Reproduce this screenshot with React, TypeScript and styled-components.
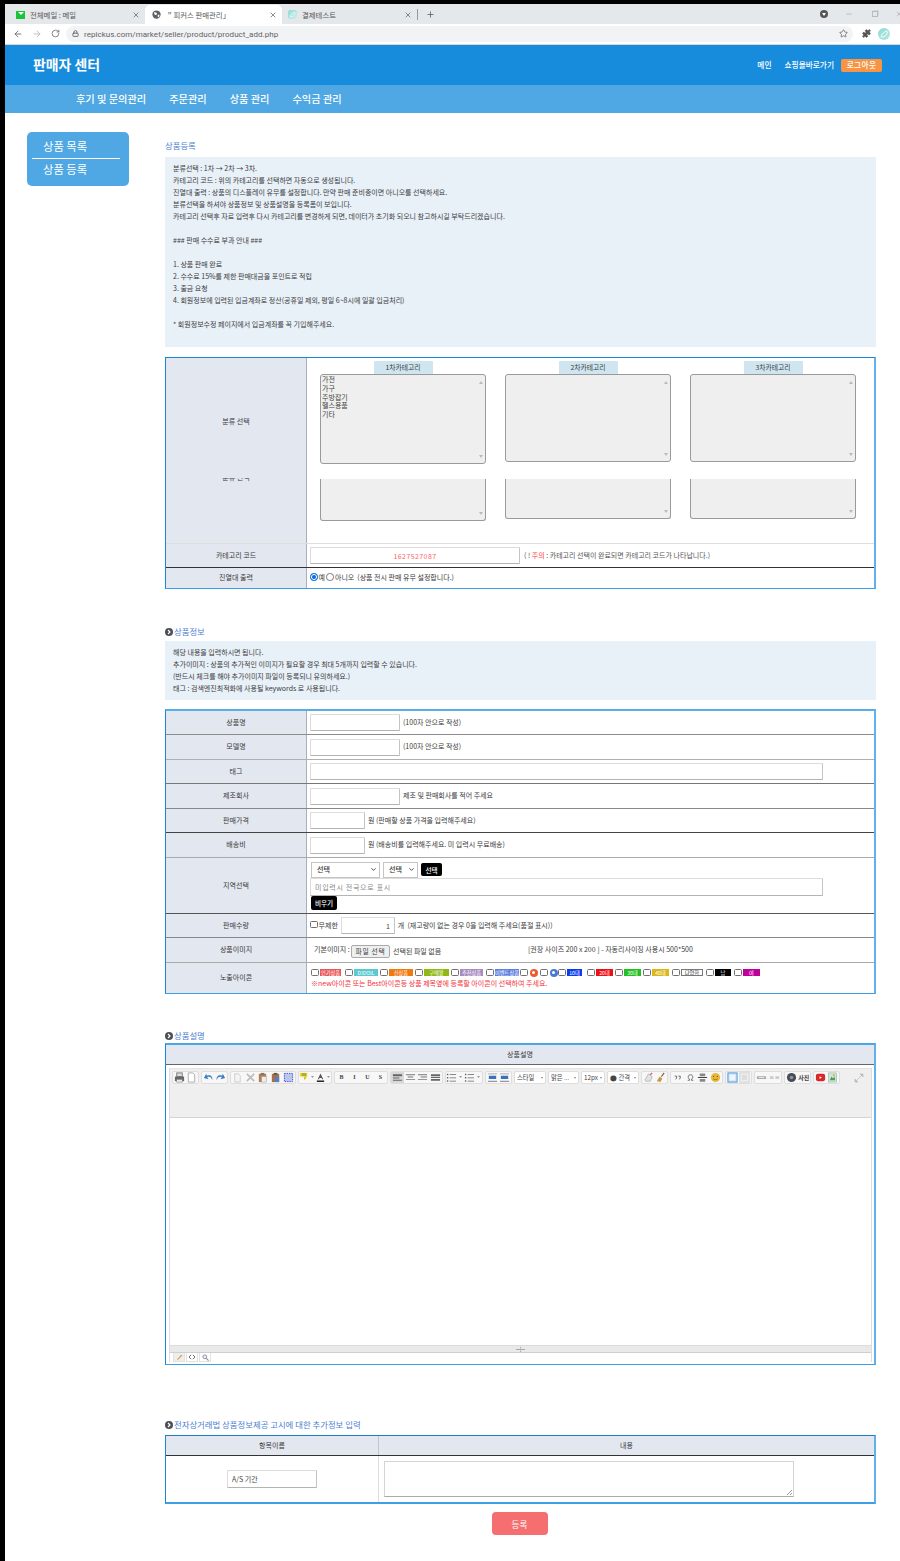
import React from "react";
import styled, { createGlobalStyle } from "styled-components";
import { ArrowLeft, ArrowRight, ChevronDown, Lock, Minus, Plus, Puzzle, RotateCw, Star, X } from "lucide-react";

const Global = createGlobalStyle`
  html, body { margin: 0; padding: 0; background: #fff; }
  * { box-sizing: border-box; }
  body { font-family: "Noto Sans CJK KR", "Noto Sans", "Liberation Sans", sans-serif; font-size: 7px; color: #3a3a3a; }
`;

const Page = styled.div`
  width: 900px; height: 1561px; overflow: hidden; position: relative;
  border-top: 4px solid #000; border-left: 5px solid #000; background: #fff;
  display: flex; flex-direction: column;
`;

/* browser chrome */
const TabStrip = styled.div`
  height: 20px; background: #e5e8eb; display: flex; align-items: stretch; flex: none;
`;
const Tab = styled.div<{ $w: number; $pad: number; $active?: boolean }>`
  width: ${p => p.$w}px; padding: 0 5px 0 ${p => p.$pad}px; display: flex; align-items: center; gap: 5px;
  margin-top: 1px; border-radius: 5px 5px 0 0; color: #555; font-size: 7.4px; white-space: nowrap;
  background: ${p => (p.$active ? "#fff" : "transparent")};
`;
const TabClose = styled.span`margin-left: auto; display: flex; color: #555;`;
const MailIcon = styled.span`
  width: 9px; height: 8px; background: #19c437; display: flex; align-items: flex-start; justify-content: center; flex: none;
  &::after { content: ""; border: 3.5px solid transparent; border-top: 3.5px solid #fff; margin-top: 1px; }
`;
const TabDivider = styled.span`width: 1px; height: 11px; background: #999; align-self: center;`;
const NewTab = styled.span`display: flex; align-items: center; margin-left: 8px; color: #555;`;
const WindowControls = styled.div`margin-left: auto; display: flex; align-items: center; gap: 17px; margin-right: -3px; color: #aaa;`;
const ProfileDot = styled.span`
  width: 8px; height: 8px; border-radius: 50%; background: #555; display: flex; align-items: center; justify-content: center;
  &::after { content: ""; border: 2px solid transparent; border-top: 3px solid #fff; margin-top: 3px; }
`;
const RestoreBox = styled.span`
  width: 6px; height: 6px; margin-left: 2px; border: 1px solid #bbb; box-shadow: 1px -1px 0 -0.3px #ccc;
`;
const AddressBar = styled.div`
  height: 21px; flex: none; background: #fff; border-bottom: 1px solid #d7d7d7; display: flex; align-items: center;
  padding: 0 8px 1px 8px; color: #5f6368;
`;
const NavIcons = styled.div`display: flex; align-items: center; gap: 9px; width: 53px;`;
const Omnibox = styled.div`
  width: 787px; height: 16px; border-radius: 8px; background: #f1f3f4; display: flex; align-items: center;
  padding: 0 5px 0 6px; gap: 5px; font: 8px Roboto, "Liberation Sans", sans-serif; color: #5f6368; letter-spacing: .004em;
`;
const OmniText = styled.span`margin-top: 1px;`;
const StarSlot = styled.span`margin-left: auto; display: flex;`;
const ExtIcons = styled.div`display: flex; align-items: center; margin-left: 9px; gap: 7px; color: #555;`;
const Avatar = styled.span`
  width: 12px; height: 12px; border-radius: 50%; background: linear-gradient(135deg, #8edbd5, #b6e6e2); display: flex;
`;
const SiteIcon = styled.span`
  width: 9px; height: 9px; border-radius: 2px; background: linear-gradient(135deg, #8edbd5, #cfeeea); flex: none;
  display: flex;
`;

/* site header */
const Header = styled.header`
  height: 40px; flex: none; background: #188cdc; display: flex; align-items: center; padding: 0 18px 0 28px; color: #fff;
`;
const Brand = styled.div`font-size: 13.9px; font-weight: 700; line-height: 1; margin-top: -1px;`;
const HeaderLinks = styled.div`margin-left: auto; display: flex; align-items: center; gap: 13px; font-size: 7.7px; font-weight: 500; padding-bottom: 2px;`;
const Logout = styled.span`
  width: 41px; height: 13px; margin: 2px 0 0 -6px; padding-bottom: 1px; border-radius: 2px; background: #f89444; display: flex; align-items: center; justify-content: center; letter-spacing: .04em;
`;
const NavBar = styled.nav`
  height: 28px; flex: none; background: #4fa8e3; display: flex; align-items: center; gap: 23px; padding: 0 0 2px 71px;
  color: #fff; font-size: 10.2px; font-weight: 500;
`;

const Content = styled.div`display: flex; align-items: flex-start;`;
const Sidebar = styled.aside`
  width: 102px; height: 54px; margin: 19px 36px 0 22px; background: #4fa8e3; border-radius: 5px; color: #fff; font-size: 11.3px; flex: none;
`;
const SideItem = styled.div<{ $first?: boolean }>`
  height: 27px; margin: 0 9px 0 5px; padding-left: 11px; line-height: 13px;
  padding-top: ${p => (p.$first ? 8 : 4)}px;
  border-bottom: ${p => (p.$first ? "1px solid #fff" : "none")};
`;
const Main = styled.main`width: 711px; padding-top: 27px; flex: none; display: flex; flex-direction: column;`;
const Title = styled.div<{ $mt?: number; $h: number }>`
  height: ${p => p.$h}px; margin-top: ${p => p.$mt ?? 0}px; line-height: 10px; font-size: 8.4px; color: #4d80d4;
  display: flex; align-items: flex-start; gap: 1px; white-space: nowrap;
`;
const TitleDot = styled.span`
  width: 8px; height: 8px; border-radius: 50%; background: #4a4f55; margin-top: 2px; display: flex; align-items: center; justify-content: center;
`;
const Note = styled.div<{ $h: number }>`
  height: ${p => p.$h}px; background: #e8f0f8; padding: 5px 8px 0; line-height: 12px; white-space: pre; color: #3c3c3c;
`;
const Panel = styled.section<{ $top: number; $bottom: number; $topColor: string; $mt: number }>`
  margin-top: ${p => p.$mt}px; border-style: solid; border-width: ${p => p.$top}px 2px ${p => p.$bottom}px 1px;
  border-color: ${p => p.$topColor} #62b0ec #3f9fe6 #1a86d6;
`;
const Row = styled.div<{ $h: number; $line?: string }>`
  height: ${p => p.$h}px; display: flex; border-bottom: ${p => (p.$line ? `1px solid ${p.$line}` : "none")};
`;
const Label = styled.div`
  width: 141px; flex: none; background: #e3e7f0; border-right: 1px solid #a9b0bc; display: flex; align-items: center; justify-content: center; padding-bottom: 2px;
`;
const CategoryLabel = styled(Label)`
  flex-direction: column; justify-content: flex-start; padding: 57px 0 0; line-height: 12px;
`;
const LabelClip = styled.div`
  height: 5px; margin-top: 51px; overflow: hidden; display: flex; align-items: flex-end; line-height: 11px;
`;
const Value = styled.div`
  flex: 1; min-width: 0; display: flex; align-items: center; gap: 3px; padding: 0 0 2px 3px; white-space: nowrap;
  & > input { margin-top: 2px; }
`;
const ColValue = styled.div<{ $pt: number }>`
  flex: 1; min-width: 0; display: flex; flex-direction: column; align-items: flex-start; padding: ${p => p.$pt}px 0 0 3px; white-space: nowrap;
`;
const Field = styled.input<{ $w: number; $h?: number; $color?: string; $align?: string; $spaced?: boolean }>`
  width: ${p => p.$w}px; height: ${p => p.$h ?? 17}px; flex: none; padding: 0 4px; background: #fff; font: inherit; outline: none;
  border: 1px solid #dcdcdc; border-bottom-color: #b4b4b4; border-right-color: #c4c4c4; border-radius: 1px;
  color: ${p => p.$color ?? "#444"}; text-align: ${p => p.$align ?? "left"};
  letter-spacing: ${p => (p.$spaced ? ".06em" : "normal")};
  &::placeholder { color: #888; letter-spacing: .1em; }
`;

/* category pickers */
const CategoryCols = styled.div`flex: 1; display: flex; gap: 19px; padding: 3px 0 0 13px;`;
const CategoryCol = styled.div`width: 166px; display: flex; flex-direction: column; align-items: center;`;
const Chip = styled.div`
  width: 59px; height: 13px; padding-bottom: 1px; background: #cfe6f1; display: flex; align-items: center; justify-content: center; border-radius: 1px 1px 0 0; font-size: 6.8px;
`;
const ListBox = styled.div<{ $h: number; $cut?: boolean; $mt?: number }>`
  width: 166px; height: ${p => p.$h}px; margin-top: ${p => p.$mt ?? 0}px; background: #efefef; position: relative; flex: none;
  border: 1px solid #9a9a9a; border-top: ${p => (p.$cut ? "none" : "1px solid #9a9a9a")};
  border-radius: ${p => (p.$cut ? "0 0 3px 3px" : "3px")};
  padding: 0 0 0 1px; line-height: 8.8px; font-size: 7px; color: #444;
`;
const ScrollArrow = styled.span<{ $up?: boolean }>`
  position: absolute; right: 2px; width: 0; height: 0; border: 2px solid transparent;
  ${p => (p.$up ? "top: 4px; border-bottom: 3px solid #bbb;" : "bottom: 3px; border-top: 3px solid #bbb;")}
`;
const Warn = styled.span`color: #f44;`;
const CodeNote = styled.span`color: #555; margin-left: 1px;`;
const RadioGroup = styled.label`
  display: inline-flex; align-items: center;
  & + & { margin-left: -1.5px; }
`;
const Radio = styled.input`
  appearance: none; width: 7.5px; height: 7.5px; margin: 0 1px 0 0; border-radius: 50%; border: 1px solid #777; background: #fff;
  &:checked { background: #0c6fe0; border-color: #0c6fe0; box-shadow: inset 0 0 0 1px #fff; }
`;
const Check = styled.input`
  appearance: none; width: 7.5px; height: 7.5px; margin: 0 1px 0 0; border-radius: 1.5px; border: 1px solid #707070; background: #fff; flex: none;
`;

const SelectBox = styled.div<{ $w: number }>`
  width: ${p => p.$w}px; height: 16px; border: 1px solid #c4c4c4; background: #fff; display: flex; align-items: center; justify-content: space-between; padding: 0 2px 1px 5px; color: #333; font-weight: 500;
`;
const RegionLine = styled.div`display: flex; align-items: center; padding-left: 1px; gap: 3px; height: 17px;`;
const BlackButton = styled.span<{ $w: number; $h: number; $ml?: number }>`
  width: ${p => p.$w}px; height: ${p => p.$h}px; margin-left: ${p => p.$ml ?? 0}px; background: #000; color: #fff; border-radius: 2px; display: flex; align-items: center; justify-content: center; font-size: 6.6px; font-weight: 500; flex: none;
`;
const FileButton = styled.span`
  width: 39px; height: 13px; margin-top: 4px; border: 1px solid #aaa; background: #efefef; border-radius: 2px; display: flex; align-items: center; justify-content: center; letter-spacing: .1em; font-size: 6.8px; flex: none;
`;
const ImageLead = styled.span`margin-left: 4px; width: 34px;`;
const FileState = styled.span`width: 132px; margin-top: 4px;`;
const IconRow = styled.div`display: flex; align-items: center; height: 9px; padding-left: 1px;`;
const IconPair = styled.label<{ $w: number }>`width: ${p => p.$w}px; flex: none; display: flex; align-items: center; gap: 0.5px;`;
const Badge = styled.span<{ $w: number; $c: string; $line?: boolean }>`
  width: ${p => p.$w}px; height: 7.5px; background: ${p => p.$c}; color: ${p => (p.$line ? "#222" : "#fff")};
  font-size: 5.2px; line-height: 7.5px; text-align: center; overflow: hidden; white-space: nowrap;
  outline: ${p => (p.$line ? "1px solid #777" : "none")}; outline-offset: -1px;
`;
const RoundBadge = styled.span<{ $c: string }>`
  width: 8px; height: 8px; margin-left: 0.5px; border-radius: 50%; background: ${p => p.$c}; display: flex; align-items: center; justify-content: center;
  &::after { content: ""; width: 3px; height: 3px; border-radius: 50%; background: #fff; }
`;
const RedNote = styled.div`color: #f2303a; margin-top: 1px; line-height: 11px; padding-left: 1px;`;

/* editor */
const HeadCell = styled.div<{ $w?: number; $bar?: boolean }>`
  ${p => (p.$w ? `width: ${p.$w}px; flex: none;` : "flex: 1;")}
  background: #e3e7f0; display: flex; align-items: center; justify-content: center; padding-bottom: 1px;
  border-right: ${p => (p.$bar ? "1px solid #c2c6cf" : "none")};
`;
const EditorWrap = styled.div`padding: 3px 1px 2px 3px;`;
const Editor = styled.div`border-left: 1px solid #ddd; border-right: 1px solid #ddd; margin-right: 1px; display: flex; flex-direction: column;`;
const Toolbar = styled.div`
  height: 50px; background: #efefef; border-top: 1px solid #e4e4e4; border-bottom: 1px solid #d4d4d4; padding: 2px 0 0 2px; display: flex; align-items: flex-start; gap: 2px;
`;
const ToolGroup = styled.div<{ $w: number }>`
  width: ${p => p.$w}px; height: 12.5px; flex: none; background: #f7f7f7; border: 1px solid #dedede; border-radius: 2px; display: flex; align-items: center; overflow: hidden;
`;
const ToolBtn = styled.span<{ $on?: boolean }>`
  flex: 1; height: 100%; display: flex; align-items: center; justify-content: center; font: 700 6px "Liberation Serif", "Noto Sans CJK KR", serif; color: #444; white-space: nowrap;
  background: ${p => (p.$on ? "#d8d8d8" : "transparent")};
`;
const ToolSelect = styled.div<{ $w: number }>`
  width: ${p => p.$w}px; height: 12.5px; flex: none; background: #fff; border: 1px solid #dedede; border-radius: 2px; font-size: 6.3px; color: #444; display: flex; align-items: center; justify-content: space-between; padding: 0 2px; white-space: nowrap;
  &::after { content: ""; border: 1.5px solid transparent; border-top: 2px solid #888; margin-top: 2px; }
`;
const Expand = styled.span`margin-left: 12px; margin-top: 2px; display: flex;`;
const EditArea = styled.div`height: 227px; background: #fff;`;
const ResizeBar = styled.div`
  height: 8px; background: #e9e9e9; border-top: 1px solid #dcdcdc; border-bottom: 1px solid #cfcfcf; display: flex; align-items: center; justify-content: center;
`;
const ModeTabs = styled.div`height: 9px; display: flex; gap: 1px; padding-left: 3px; background: #fff;`;
const ModeTab = styled.span<{ $on?: boolean }>`
  width: 12px; height: 9px; border: 1px solid #e2e2e2; border-top: none; background: ${p => (p.$on ? "#eee" : "#fff")}; display: flex; align-items: center; justify-content: center;
`;
const InfoCellLeft = styled.div`width: 213px; flex: none; border-right: 1px solid #ddd; padding: 14px 0 0 61px;`;
const InfoCellRight = styled.div`flex: 1; padding: 5px 0 0 5px; position: relative;`;
const TextArea = styled.div`
  width: 410px; height: 36px; background: #fff; border: 1px solid #d4d4d4; border-bottom-color: #aaa; position: relative;
  &::after { content: ""; position: absolute; right: 1px; bottom: 1px; width: 5px; height: 5px; background: linear-gradient(135deg, transparent 50%, #999 50%, #999 60%, transparent 60%, transparent 75%, #999 75%, #999 85%, transparent 85%); }
`;
const SubmitRow = styled.div`display: flex; justify-content: center; margin-top: 8px; padding-right: 2px;`;
const Submit = styled.span`
  width: 56px; height: 23px; background: #f56f70; color: #fff; border-radius: 4px; display: flex; align-items: center; justify-content: center; font-size: 8.6px;
`;

const S = ({ children }: { children: React.ReactNode }) => (
  <svg width="11" height="11" viewBox="0 0 12 12">{children}</svg>
);
const icons: Record<string, React.ReactNode> = {
  print: <S><rect x="3" y="1" width="6" height="4" fill="#ddd" stroke="#777" /><rect x="1" y="5" width="10" height="5" fill="#666" /><rect x="3" y="8" width="6" height="3" fill="#eee" stroke="#777" strokeWidth=".6" /></S>,
  doc: <S><path d="M2.500 1h5l2 2v8h-7z" fill="#fff" stroke="#aaa" /></S>,
  undo: <S><path d="M10 9C9.500 5.500 7 4.500 4.500 5.500L6 8 1 6.500 3.500 2l.7 2C8 2.500 11 5 10 9z" fill="#3b7cc6" /></S>,
  redo: <S><path d="M2 9c.5-3.500 3-4.500 5.500-3.500L6 8l5-1.500L8.500 2l-.7 2C4 2.500 1 5 2 9z" fill="#3b7cc6" /></S>,
  copy: <S><path d="M3 2h4l2 2v7H3z" fill="#f4f4f4" stroke="#ccc" /></S>,
  cut: <S><path d="M2 2l8 8M10 2l-8 8" stroke="#bbb" strokeWidth="1.800" /></S>,
  paste: <S><rect x="2" y="2" width="8" height="9" fill="#b97b45" /><rect x="4" y="1" width="4" height="2" fill="#777" /><rect x="5" y="5" width="5" height="6" fill="#eee" stroke="#999" strokeWidth=".5" /></S>,
  pasteText: <S><rect x="2" y="2" width="8" height="9" fill="#a9703c" /><rect x="4" y="1" width="4" height="2" fill="#555" /><rect x="5" y="5" width="5" height="6" fill="#5e7cc4" /></S>,
  all: <S><rect x="1.500" y="1.500" width="9" height="9" fill="#b9c4f0" stroke="#3d4fc4" strokeDasharray="1.500 1" /></S>,
  hilite: <S><rect x="1" y="1" width="8" height="4" fill="#e6dc20" /><path d="M3 2h5M3 3.500h5" stroke="#555" strokeWidth=".6" /><path d="M5 5h3v1.500L6 9z" fill="#d9c820" /></S>,
  color: <S><path d="M6 1.500L3 8h1.300l.6-1.500h2.200L7.700 8H9z" fill="#555" /><rect x="2" y="9.300" width="8" height="1.500" fill="#111" /></S>,
  caret: <svg width="5" height="4" viewBox="0 0 5 4"><path d="M1 1h3L2.500 3z" fill="#999" /></svg>,
  alignL: <S><path d="M1 2.500h10v2H1zM1 6h7v1H1zM1 8.500h10v1H1z" fill="#666" /></S>,
  alignC: <S><path d="M1 2.500h10v1H1zM3 5h6v1H3zM1 7.500h10v1H1z" fill="#777" /></S>,
  alignR: <S><path d="M1 2.500h10v1H1zM4 5h7v1H4zM1 7.500h10v1H1z" fill="#777" /></S>,
  alignJ: <S><path d="M1 2.500h10v2H1zM1 5.500h10v1H1zM1 7.500h10v2H1z" fill="#666" /></S>,
  ul: <S><path d="M1 2h1.500v1.500H1zM1 5.500h1.500V7H1zM1 9h1.500v1.500H1zM4 2.500h7v.8H4zM4 6h7v.8H4zM4 9.500h7v.8H4z" fill="#666" /></S>,
  indent: <S><path d="M1 1.500h10v1H1zM1 9.500h10v1.500H1z" fill="#999" /><path d="M2 4h8v3.500H2z" fill="#3b6fc0" /></S>,
  eraser: <S><path d="M2 9l4-7 4 3-2 5H3z" fill="#e3e3e3" stroke="#999" strokeWidth=".6" /><path d="M8 3l2-2" stroke="#c55" strokeWidth="1.200" /></S>,
  broom: <S><path d="M2 10l3-5 3 2-2 4z" fill="#c79a45" /><path d="M7 5l3-4" stroke="#7a5a2a" strokeWidth="1.200" /></S>,
  quote: <S><path d="M3 4.500h2v2L4 8M7 4.500h2v2L8 8" fill="none" stroke="#555" strokeWidth=".9" /></S>,
  omega: <S><path d="M3 9h2V8C3 7 2.800 3 6 3s3 4 1 5v1h2" fill="none" stroke="#555" strokeWidth=".9" /></S>,
  hr: <S><path d="M3 1.500h6v3H3zM3 7.500h6v3H3z" fill="#888" /><path d="M1 6h10" stroke="#333" /></S>,
  smile: <S><circle cx="6" cy="6" r="5" fill="#e8b93a" /><circle cx="4" cy="4.800" r=".7" fill="#7a5a10" /><circle cx="8" cy="4.800" r=".7" fill="#7a5a10" /><path d="M3.500 7.500Q6 9.500 8.500 7.500" stroke="#7a5a10" strokeWidth=".7" fill="none" /></S>,
  table: <S><rect x="1" y="1" width="10" height="10" fill="#cfe2f6" stroke="#3f94d8" /><rect x="3" y="3" width="6" height="6" fill="#eef5fc" /></S>,
  tableOff: <S><rect x="1" y="1" width="10" height="10" fill="#f2f2f2" stroke="#ccc" /><path d="M3 3h6v6H3z" fill="#ddd" /></S>,
  link: <S><path d="M1 4.500h10v3H1z" fill="#aaa" /><path d="M3 6h6" stroke="#eee" /></S>,
  unlink: <S><path d="M1 4.500h4v3H1zM7 4.500h4v3H7z" fill="#ccc" /></S>,
  camera: <S><circle cx="6" cy="6" r="5" fill="#484c54" /><circle cx="6" cy="6" r="2" fill="#8893a4" /></S>,
  youtube: <S><rect x="1" y="2" width="10" height="8" rx="2" fill="#d9262b" /><path d="M5 4.500l2.500 1.500L5 7.500z" fill="#fff" /></S>,
  photo: <S><rect x="1.500" y="1" width="9" height="10" fill="#cfe6d0" stroke="#9ab" strokeWidth=".6" /><path d="M3 9l2-4 1.500 2L8 5l1 4z" fill="#4a9a5a" /><circle cx="7.500" cy="3.500" r="1" fill="#d9a93a" /></S>,
  pencil: <svg width="7" height="7" viewBox="0 0 8 8"><path d="M1 7l1-2 4-4 1 1-4 4z" fill="#d8a040" /><path d="M5.500 1.500l1 1" stroke="#d55" /></svg>,
  code: <svg width="8" height="6" viewBox="0 0 9 7"><path d="M3.500 1L1 3.500 3.500 6M5.500 1L8 3.500 5.500 6" fill="none" stroke="#555" /></svg>,
  zoom: <svg width="7" height="7" viewBox="0 0 8 8"><circle cx="3.200" cy="3.200" r="2.200" fill="#e8eef6" stroke="#889" /><path d="M5 5l2.500 2.500" stroke="#889" strokeWidth="1.200" /></svg>,
};

const Leaf = () => (
  <svg width="100%" height="100%" viewBox="0 0 12 12"><path d="M3 9.500C3.500 6 6 3.500 9.500 3M4 9c3 0 5-2 5.500-5" fill="none" stroke="#fff" strokeWidth=".9" /></svg>
);
const DotChevron = () => (
  <svg width="6" height="6" viewBox="0 0 6 6"><path d="M2 1l2 2-2 2" fill="none" stroke="#fff" strokeWidth="1.200" /></svg>
);
const PageGlobe = () => (
  <svg width="9" height="9" viewBox="0 0 12 12" style={{ flex: "none" }}>
    <circle cx="6" cy="6" r="5.500" fill="#5f6368" />
    <path d="M3 2.500l3 1 1 2-2 1-2-1zM7.500 7l2-1 .5 2-2 2z" fill="#fff" />
  </svg>
);

const noteA = `분류선택 : 1차 → 2차 → 3차.
카테고리 코드 : 위의 카테고리를 선택하면 자동으로 생성됩니다.
진열대 출력 : 상품의 디스플레이 유무를 설정합니다. 만약 판매 준비중이면 아니오를 선택하세요.
분류선택을 하셔야 상품정보 및 상품설명을 등록폼이 보입니다.
카테고리 선택후 자료 입력후 다시 카테고리를 변경하게 되면, 데이터가 초기화 되오니 참고하시길 부탁드리겠습니다.

### 판매 수수료 부과 안내 ###

1. 상품 판매 완료
2. 수수료 15%를 제한 판매대금을 포인트로 적립
3. 출금 요청
4. 회원정보에 입력된 입금계좌로 정산(공휴일 제외, 평일 6~8시에 일괄 입금처리)

* 회원정보수정 페이지에서 입금계좌를 꼭 기입해주세요.`;

const noteB = `해당 내용을 입력하시면 됩니다.
추가이미지 : 상품의 추가적인 이미지가 필요할 경우 최대 5개까지 입력할 수 있습니다.
(반드시 체크를 해야 추가이미지 파일이 등록되니 유의하세요.)
태그 : 검색엔진최적화에 사용될 keywords 로 사용됩니다.`;

const badges: { pair: number; w: number; c: string; t?: string; round?: boolean; line?: boolean }[] = [
  { pair: 34, w: 21, c: "#e8585a", t: "인기상품" },
  { pair: 35, w: 24, c: "#5cc8cf", t: "DIDOIL" },
  { pair: 35, w: 24, c: "#f07a10", t: "신상품" },
  { pair: 36, w: 25, c: "#8fb814", t: "구매왕" },
  { pair: 35, w: 23, c: "#a68cc0", t: "추천상품" },
  { pair: 34, w: 24, c: "#5f7fdf", t: "이벤트상품" },
  { pair: 20, w: 8, c: "#ee5a30", round: true },
  { pair: 18, w: 8, c: "#4a78d8", round: true },
  { pair: 29, w: 15, c: "#0c3bf0", t: "10대" },
  { pair: 28, w: 17, c: "#f00d14", t: "20대" },
  { pair: 28, w: 17, c: "#22c020", t: "30대" },
  { pair: 29, w: 17, c: "#dcb820", t: "40대" },
  { pair: 34, w: 22, c: "#fff", t: "다양한", line: true },
  { pair: 28, w: 16, c: "#000", t: "남" },
  { pair: 27, w: 17, c: "#c0009c", t: "여" },
];

const toolbar: { w: number; items?: (string | [string, string])[]; sel?: string }[] = [
  { w: 27, items: ["print", "doc"] },
  { w: 27, items: ["undo", "redo"] },
  { w: 66, items: ["copy", "cut", "paste", "pasteText", "all"] },
  { w: 34, items: ["hilite", "caret", "color", "caret"] },
  { w: 54, items: [["t", "B"], ["t", "I"], ["t", "U"], ["t", "S"]] },
  { w: 53, items: ["alignL", "alignC", "alignR", "alignJ"] },
  { w: 38, items: ["ul", "caret", "ul", "caret"] },
  { w: 27, items: ["indent", "indent"] },
  { w: 32, sel: "스타일" },
  { w: 31, sel: "맑은 ..." },
  { w: 24, sel: "12px" },
  { w: 32, sel: "⬤ 간격" },
  { w: 27, items: ["eraser", "broom"] },
  { w: 53, items: ["quote", "omega", "hr", "smile"] },
  { w: 27, items: ["table", "tableOff"] },
  { w: 28, items: ["link", "unlink"] },
  { w: 27, items: ["camera", ["t", "사진"]] },
  { w: 27, items: ["youtube", "photo"] },
];

const Icon = ({ n }: { n: string }) => <>{icons[n]}</>;

export default function App() {
  return (
    <Page>
      <Global />
      <TabStrip>
        <Tab $w={140} $pad={11}><MailIcon />전체메일 : 메일<TabClose><X size={8} /></TabClose></Tab>
        <Tab $w={137} $pad={7} $active><PageGlobe />＂피커스 판매관리」<TabClose><X size={8} /></TabClose></Tab>
        <Tab $w={135} $pad={6}><SiteIcon><Leaf /></SiteIcon>결제테스트<TabClose><X size={8} /></TabClose></Tab>
        <TabDivider />
        <NewTab><Plus size={9} /></NewTab>
        <WindowControls>
          <ProfileDot />
          <Minus size={8} />
          <RestoreBox />
          <X size={8} />
        </WindowControls>
      </TabStrip>
      <AddressBar>
        <NavIcons>
          <ArrowLeft size={10} />
          <ArrowRight size={10} color="#b5b5b5" />
          <RotateCw size={9} />
        </NavIcons>
        <Omnibox>
          <Lock size={7} strokeWidth={3} />
          <OmniText>repickus.com/market/seller/product/product_add.php</OmniText>
          <StarSlot><Star size={9} /></StarSlot>
        </Omnibox>
        <ExtIcons>
          <Puzzle size={9} fill="#555" />
          <Avatar><Leaf /></Avatar>
        </ExtIcons>
      </AddressBar>

      <Header>
        <Brand>판매자 센터</Brand>
        <HeaderLinks>
          <span>메인</span>
          <span>쇼핑몰바로가기</span>
          <Logout>로그아웃</Logout>
        </HeaderLinks>
      </Header>
      <NavBar>
        <span>후기 및 문의관리</span>
        <span>주문관리</span>
        <span>상품 관리</span>
        <span>수익금 관리</span>
      </NavBar>

      <Content>
        <Sidebar>
          <SideItem $first>상품 목록</SideItem>
          <SideItem>상품 등록</SideItem>
        </Sidebar>
        <Main>
          <Title $h={17}>상품등록</Title>
          <Note $h={190}>{noteA}</Note>

          <Panel $mt={10} $top={1} $bottom={1} $topColor="#1a86d6">
            <Row $h={186} $line="#dedede">
              <CategoryLabel>
                <div>분류 선택</div>
                <LabelClip>분류 선택</LabelClip>
              </CategoryLabel>
              <CategoryCols>
                <CategoryCol>
                  <Chip>1차카테고리</Chip>
                  <ListBox $h={90}>
                    가전<br />가구<br />주방잡기<br />헬스용품<br />기타
                    <ScrollArrow $up /><ScrollArrow />
                  </ListBox>
                  <ListBox $h={42} $cut $mt={15}><ScrollArrow /></ListBox>
                </CategoryCol>
                <CategoryCol>
                  <Chip>2차카테고리</Chip>
                  <ListBox $h={88}><ScrollArrow $up /><ScrollArrow /></ListBox>
                  <ListBox $h={40} $cut $mt={17}><ScrollArrow /></ListBox>
                </CategoryCol>
                <CategoryCol>
                  <Chip>3차카테고리</Chip>
                  <ListBox $h={88}><ScrollArrow $up /><ScrollArrow /></ListBox>
                  <ListBox $h={40} $cut $mt={17}><ScrollArrow /></ListBox>
                </CategoryCol>
              </CategoryCols>
            </Row>
            <Row $h={24} $line="#333">
              <Label>카테고리 코드</Label>
              <Value>
                <Field $w={210} $color="#f66" $align="center" $spaced defaultValue="1627527087" />
                <CodeNote>( ! <Warn>주의</Warn> : 카테고리 선택이 완료되면 카테고리 코드가 나타납니다.)</CodeNote>
              </Value>
            </Row>
            <Row $h={20}>
              <Label>진열대 출력</Label>
              <Value>
                <RadioGroup><Radio type="radio" name="disp" defaultChecked />예</RadioGroup>
                <RadioGroup><Radio type="radio" name="disp" />아니오</RadioGroup>
                <span>(상품 전시 판매 유무 설정합니다.)</span>
              </Value>
            </Row>
          </Panel>

          <Title $mt={37} $h={15}><TitleDot><DotChevron /></TitleDot>상품정보</Title>
          <Note $h={59}>{noteB}</Note>

          <Panel $mt={9} $top={2} $bottom={1} $topColor="#5aaee8">
            <Row $h={24} $line="#8d8d8d">
              <Label>상품명</Label>
              <Value><Field $w={90} />(100자 안으로 작성)</Value>
            </Row>
            <Row $h={25} $line="#b0b0b0">
              <Label>모델명</Label>
              <Value><Field $w={90} />(100자 안으로 작성)</Value>
            </Row>
            <Row $h={24} $line="#777">
              <Label>태그</Label>
              <Value><Field $w={513} /></Value>
            </Row>
            <Row $h={25} $line="#888">
              <Label>제조회사</Label>
              <Value><Field $w={90} />제조 및 판매회사를 적어 주세요</Value>
            </Row>
            <Row $h={24} $line="#444">
              <Label>판매가격</Label>
              <Value><Field $w={55} />원 (판매할 상품 가격을 입력해주세요)</Value>
            </Row>
            <Row $h={25} $line="#aaa">
              <Label>배송비</Label>
              <Value><Field $w={55} />원 (배송비를 입력해주세요. 미 입력시 무료배송)</Value>
            </Row>
            <Row $h={56} $line="#555">
              <Label>지역선택</Label>
              <ColValue $pt={3}>
                <RegionLine>
                  <SelectBox $w={69}>선택<ChevronDown size={7} strokeWidth={3} /></SelectBox>
                  <SelectBox $w={35}>선택<ChevronDown size={7} strokeWidth={3} /></SelectBox>
                  <BlackButton $w={21} $h={13}>선택</BlackButton>
                </RegionLine>
                <Field $w={513} $h={18} placeholder="미입력시 전국으로 표시" />
                <BlackButton $w={26} $h={14} $ml={1}>비우기</BlackButton>
              </ColValue>
            </Row>
            <Row $h={24} $line="#888">
              <Label>판매수량</Label>
              <Value>
                <RadioGroup><Check type="checkbox" />무제한</RadioGroup>
                <Field $w={54} $align="right" defaultValue="1" />
                개 &nbsp;(재고량이 없는 경우 0을 입력해 주세요(품절 표시))
              </Value>
            </Row>
            <Row $h={25} $line="#aaa">
              <Label>상품이미지</Label>
              <Value>
                <ImageLead>기본이미지 :</ImageLead>
                <FileButton>파일 선택</FileButton>
                <FileState>선택된 파일 없음</FileState>
                <span>[권장 사이즈 200 x 200 ] - 자동리사이징 사용시 500*500</span>
              </Value>
            </Row>
            <Row $h={30}>
              <Label>노출아이콘</Label>
              <ColValue $pt={5}>
                <IconRow>
                  {badges.map((b, i) => (
                    <IconPair key={i} $w={b.pair}>
                      <Check type="checkbox" />
                      {b.round ? <RoundBadge $c={b.c} /> : <Badge $w={b.w} $c={b.c} $line={b.line}>{b.t}</Badge>}
                    </IconPair>
                  ))}
                </IconRow>
                <RedNote>※new아이콘 또는 Best아이콘등 상품 제목옆에 등록할 아이콘이 선택하여 주세요.</RedNote>
              </ColValue>
            </Row>
          </Panel>

          <Title $mt={36} $h={13}><TitleDot><DotChevron /></TitleDot>상품설명</Title>
          <Panel $mt={0} $top={2} $bottom={1} $topColor="#4aa6e6">
            <Row $h={20} $line="#666"><HeadCell>상품설명</HeadCell></Row>
            <EditorWrap>
              <Editor>
                <Toolbar>
                  {toolbar.map((g, i) =>
                    g.sel ? (
                      <ToolSelect key={i} $w={g.w}>{g.sel}</ToolSelect>
                    ) : (
                      <ToolGroup key={i} $w={g.w}>
                        {g.items!.map((it, j) =>
                          typeof it === "string" ? (
                            <ToolBtn key={j} $on={it === "alignL"}><Icon n={it} /></ToolBtn>
                          ) : (
                            <ToolBtn key={j}>{it[1]}</ToolBtn>
                          )
                        )}
                      </ToolGroup>
                    )
                  )}
                  <Expand>
                    <svg width="10" height="10" viewBox="0 0 10 10"><path d="M6 1h3v3zM1 6v3h3zM8 2L2 8" fill="#bbb" stroke="#bbb" strokeWidth=".7" /></svg>
                  </Expand>
                </Toolbar>
                <EditArea />
                <ResizeBar>
                  <svg width="9" height="5" viewBox="0 0 9 5"><path d="M0 2.500h9M4.500 0v1.500M4.500 3.500V5" stroke="#aaa" /></svg>
                </ResizeBar>
                <ModeTabs>
                  <ModeTab $on><Icon n="pencil" /></ModeTab>
                  <ModeTab><Icon n="code" /></ModeTab>
                  <ModeTab><Icon n="zoom" /></ModeTab>
                </ModeTabs>
              </Editor>
            </EditorWrap>
          </Panel>

          <Title $mt={54} $h={16}><TitleDot><DotChevron /></TitleDot>전자상거래법 상품정보제공 고시에 대한 추가정보 입력</Title>
          <Panel $mt={0} $top={1} $bottom={2} $topColor="#1f7cc0">
            <Row $h={20} $line="#333">
              <HeadCell $w={213} $bar>항목이름</HeadCell>
              <HeadCell>내용</HeadCell>
            </Row>
            <Row $h={46}>
              <InfoCellLeft><Field $w={90} $h={18} defaultValue="A/S 기간" /></InfoCellLeft>
              <InfoCellRight><TextArea /></InfoCellRight>
            </Row>
          </Panel>
          <SubmitRow><Submit>등록</Submit></SubmitRow>
        </Main>
      </Content>
    </Page>
  );
}
